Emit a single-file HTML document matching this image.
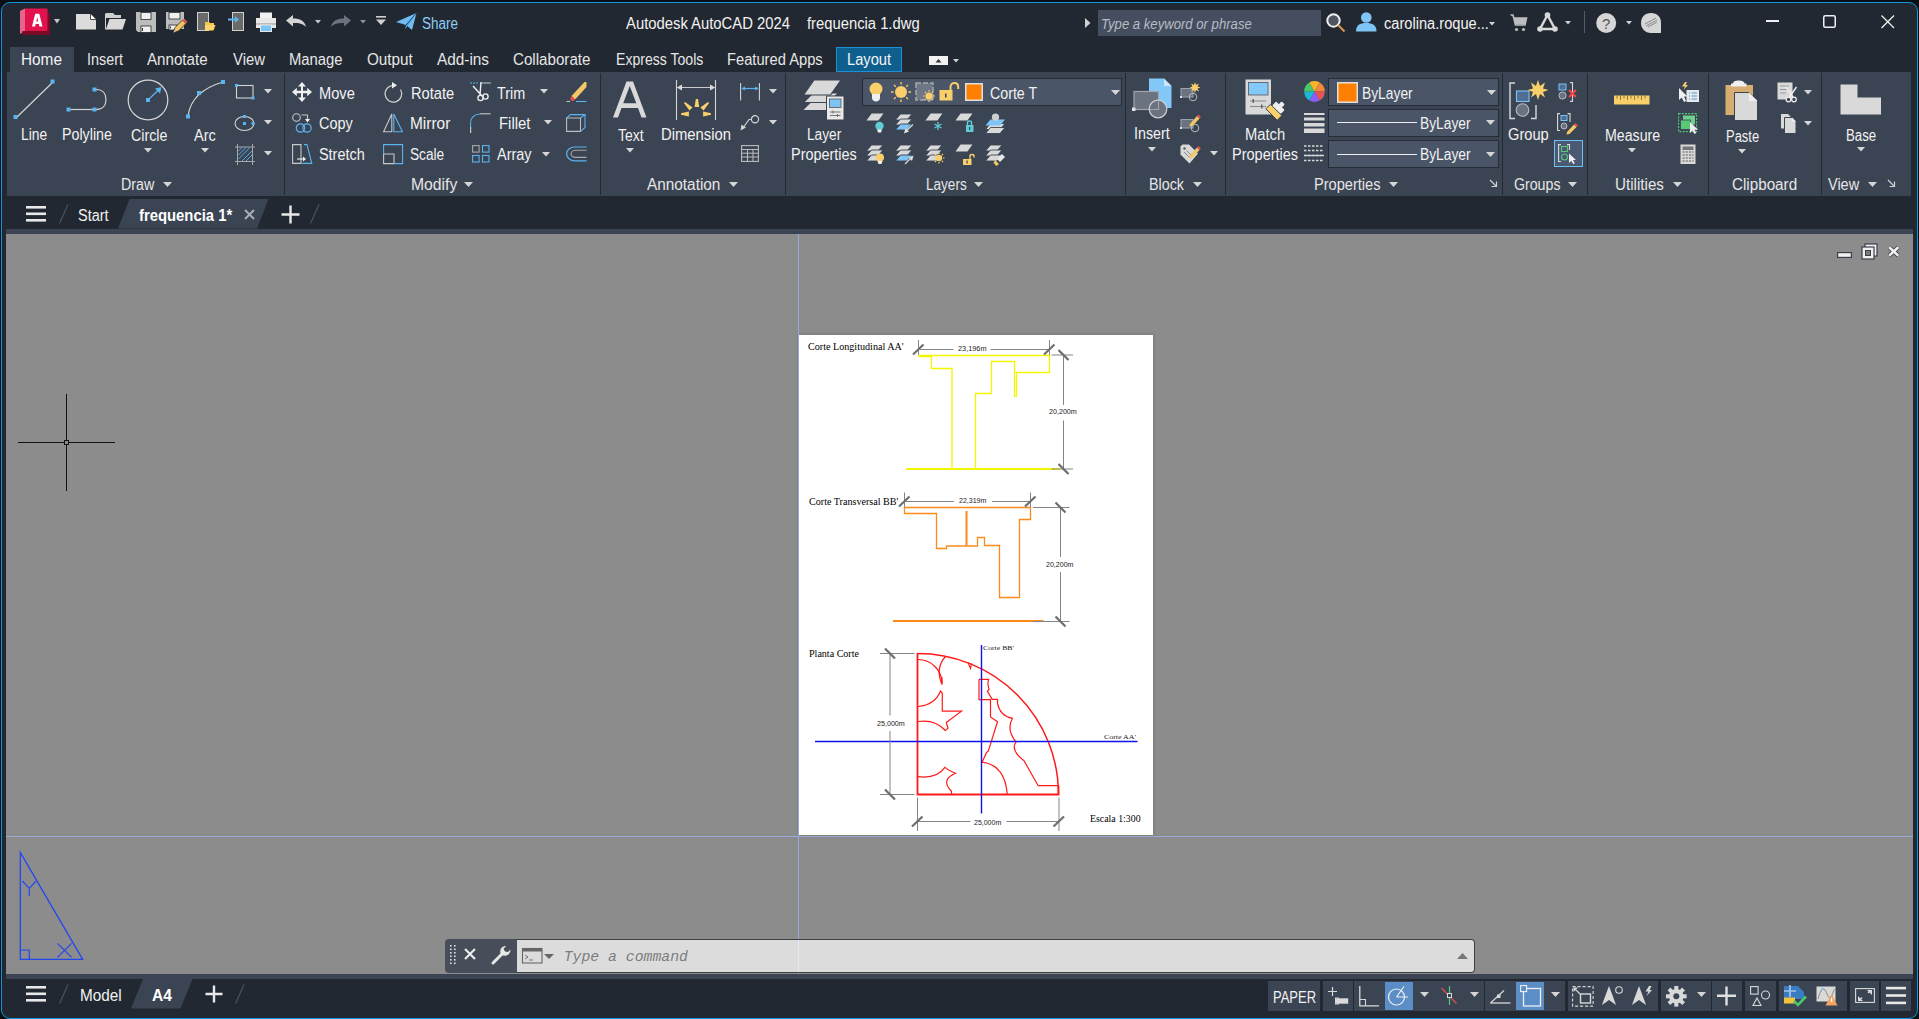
<!DOCTYPE html>
<html><head><meta charset="utf-8"><style>
html,body{margin:0;padding:0;width:1919px;height:1019px;overflow:hidden;background:#0b0e13}
.r{position:absolute;display:block}
.t{position:absolute;white-space:nowrap;line-height:1;transform-origin:0 0}
svg.r{overflow:visible}
</style></head><body>
<div class="r" style="left:1px;top:2px;width:1917px;height:1017px;background:#222831;border:1px solid #0f95dc;border-radius:9px;box-sizing:border-box"></div>
<div class="r" style="left:7px;top:72px;width:1904px;height:124px;background:#3b4453"></div>
<div class="r" style="left:6px;top:229px;width:1907px;height:5px;background:#3b4453"></div>
<div class="r" style="left:6px;top:234px;width:1907px;height:740px;background:#8c8c8c"></div>
<div class="r" style="left:6px;top:974px;width:1907px;height:5px;background:#3b4453"></div>
<svg class="r" style="left:19px;top:7px;" width="33" height="30" viewBox="0 0 33 30"><path d="M1 4 L6 1.5 V24 L1 27 Z" fill="#e8648c"/>
<path d="M3.5 24 H31 V28 H3.5 Z" fill="#7a0a26"/>
<path d="M28.5 6 H31 V28 H28.5 Z" fill="#7a0a26"/>
<rect x="6" y="1.5" width="22.5" height="22.5" fill="#e3124d"/>
<path d="M13 19.5 L16.2 6.7 H20.3 L23.5 19.5 H20.4 L19.8 17 H16.7 L16.1 19.5 Z M17.3 14.4 H19.2 L18.25 10.2 Z" fill="#fff"/></svg>
<svg class="r" style="left:54px;top:19px;" width="6" height="4.5" viewBox="0 0 6 4.5"><path d="M0 0H6 L3.0 4.5 Z" fill="#c8c8c8"/></svg>
<svg class="r" style="left:76px;top:13px;" width="21" height="17" viewBox="0 0 21 17"><path d="M0 1 H14.5 L20 6.5 V16.5 H0 Z" fill="#dcdcdc"/><path d="M14.5 1 V6.5 H20" fill="#fff" stroke="#222831" stroke-width="0.8"/></svg>
<svg class="r" style="left:105px;top:12px;" width="22" height="19" viewBox="0 0 22 19"><path d="M1 1 H8 L10 3 H16 V6 H1 Z" fill="#cfcfcf"/><path d="M1 6 V17 L4.5 7 H21 L17.5 17.5 H1" fill="#d9d9d9"/><path d="M0.5 1.5 V17.5" stroke="#cfcfcf" stroke-width="1"/></svg>
<svg class="r" style="left:136px;top:12px;" width="20" height="21" viewBox="0 0 20 21"><path d="M0 0 H20 V20 H0 Z" fill="#bdbdbd"/><rect x="5" y="0.5" width="10" height="7" fill="#f0f0f0" stroke="#222831" stroke-width="0.8"/><rect x="5" y="14" width="10" height="6.5" fill="#f0f0f0" stroke="#222831" stroke-width="0.8"/><rect x="6" y="16" width="1" height="3" fill="#333"/><path d="M0 18 L2 20 H0Z" fill="#222831"/></svg>
<svg class="r" style="left:166px;top:12px;" width="22" height="21" viewBox="0 0 22 21"><path d="M0 0 H18 V17 H0 Z" fill="#bdbdbd"/><rect x="3" y="0.5" width="11" height="6.5" fill="#f0f0f0" stroke="#222831" stroke-width="0.8"/><rect x="3" y="13" width="8" height="5" fill="#f0f0f0" stroke="#222831" stroke-width="0.8"/><rect x="4" y="14.5" width="1" height="2" fill="#333"/><path d="M7.5 20.5 L9 15.5 L16.5 8 L20 11.5 L12.5 19Z" fill="#f3c560" stroke="#222831" stroke-width="0.8"/><path d="M16.5 8 L18 6.5 L21.5 10 L20 11.5Z" fill="#e55"/><path d="M7.5 20.5 L8.2 18 L10 19.8Z" fill="#bbb"/></svg>
<svg class="r" style="left:197px;top:12px;" width="19" height="20" viewBox="0 0 19 20"><rect x="0.5" y="0.5" width="11" height="18" fill="#6a6a6a" stroke="#d0d0d0" stroke-width="1"/><path d="M8 10 H12 L13 11 H17 V13 H8Z" fill="#f5c74e"/><path d="M8 13 H18.5 L16.5 18.5 H8Z" fill="#ffd66b"/></svg>
<svg class="r" style="left:228px;top:12px;" width="17" height="20" viewBox="0 0 17 20"><rect x="4.5" y="0.5" width="11" height="18" fill="#6a6a6a" stroke="#d0d0d0" stroke-width="1"/><path d="M0 6.5 H7 V4 L11 7.5 L7 11 V8.5 H0 Z" fill="#5ab4f0"/></svg>
<svg class="r" style="left:256px;top:12px;" width="20" height="20" viewBox="0 0 20 20"><rect x="4" y="0.5" width="12" height="6" fill="#f2f2f2"/><path d="M0 6 H20 V16 H0Z" fill="#e8e8e8"/><rect x="0" y="11" width="20" height="2" fill="#bdbdbd"/><rect x="4.5" y="13" width="11" height="6.5" fill="#7cc4f5" stroke="#e8e8e8" stroke-width="1"/></svg>
<svg class="r" style="left:286px;top:15px;" width="21" height="13" viewBox="0 0 21 13"><path d="M0 5.5 L7 0 V3.5 C14 3.5 19 6 20 12 C17 8.5 13 8 7 8 V11.5 Z" fill="#d4d4d4"/></svg>
<svg class="r" style="left:315px;top:19.5px;" width="6" height="3.5" viewBox="0 0 6 3.5"><path d="M0 0H6 L3.0 3.5 Z" fill="#c8c8c8"/></svg>
<svg class="r" style="left:331px;top:15px;" width="20" height="13" viewBox="0 0 20 13"><path d="M20 5.5 L13 0 V3.5 C6 3.5 1 6 0 12 C3 8.5 7 8 13 8 V11.5 Z" fill="#6b7280"/></svg>
<svg class="r" style="left:360px;top:19.5px;" width="6" height="3.5" viewBox="0 0 6 3.5"><path d="M0 0H6 L3.0 3.5 Z" fill="#8b8f96"/></svg>
<svg class="r" style="left:376px;top:16px;" width="10" height="10" viewBox="0 0 10 10"><rect x="0" y="0" width="10" height="1.6" fill="#d0d0d0"/><path d="M0 3.5 H10 L5 9 Z" fill="#d0d0d0"/></svg>
<svg class="r" style="left:396px;top:13px;" width="21" height="18" viewBox="0 0 21 18"><path d="M0 9 L20.5 0 L16 17 L10 12 Z" fill="#6fbdf2"/><path d="M10 12 L20.5 0 L9 16.5 Z" fill="#4a9ed9"/><path d="M10 12 L20.5 0" stroke="#222831" stroke-width="0.8"/></svg>
<div class="t" style="left:422.00px;top:15.95px;font-size:16px;font-family:'Liberation Sans',sans-serif;font-weight:normal;font-style:normal;color:#8ccdf5;transform:scaleX(0.8421)">Share</div>
<div class="t" style="left:626.00px;top:15.65px;font-size:16px;font-family:'Liberation Sans',sans-serif;font-weight:normal;font-style:normal;color:#f2f2f2;transform:scaleX(0.9266)">Autodesk AutoCAD 2024</div>
<div class="t" style="left:807.00px;top:15.65px;font-size:16px;font-family:'Liberation Sans',sans-serif;font-weight:normal;font-style:normal;color:#f2f2f2;transform:scaleX(0.9240)">frequencia 1.dwg</div>
<svg class="r" style="left:1085px;top:18px;" width="6" height="10" viewBox="0 0 6 10"><path d="M0 0 L5.5 5 L0 10Z" fill="#d0d0d0"/></svg>
<div class="r" style="left:1098px;top:10px;width:223px;height:26px;background:#454e5f"></div>
<div class="t" style="left:1101.40px;top:16.30px;font-size:15px;font-family:'Liberation Sans',sans-serif;font-weight:normal;font-style:italic;color:#b7bcc4;transform:scaleX(0.8749)">Type a keyword or phrase</div>
<svg class="r" style="left:1326px;top:13px;" width="20" height="20" viewBox="0 0 20 20"><circle cx="7.5" cy="7.5" r="6.2" fill="#505560" stroke="#f0f0f0" stroke-width="2"/><path d="M12 12 L18.5 18.5" stroke="#d69a4e" stroke-width="2"/></svg>
<svg class="r" style="left:1356px;top:12px;" width="21" height="20" viewBox="0 0 21 20"><circle cx="10.3" cy="5.5" r="5.3" fill="#7ec4f7"/><path d="M0 19.5 C0 13 4 11 10.3 11 C16.5 11 20.5 13 20.5 19.5 Z" fill="#7ec4f7"/></svg>
<div class="t" style="left:1383.50px;top:16.15px;font-size:16px;font-family:'Liberation Sans',sans-serif;font-weight:normal;font-style:normal;color:#f2f2f2;transform:scaleX(0.9142)">carolina.roque...</div>
<svg class="r" style="left:1489px;top:21.5px;" width="6" height="3.5" viewBox="0 0 6 3.5"><path d="M0 0H6 L3.0 3.5 Z" fill="#d0d0d0"/></svg>
<svg class="r" style="left:1510px;top:14px;" width="17" height="18" viewBox="0 0 17 18"><path d="M0.5 1 H3 L5.5 11 H15 L16.5 4 H4" fill="none" stroke="#bdbdbd" stroke-width="1.6"/><path d="M4 4 H16.5 L15 10.5 H5.5Z" fill="#bdbdbd"/><circle cx="6.5" cy="15.5" r="1.6" fill="#bdbdbd"/><circle cx="13.5" cy="15.5" r="1.6" fill="#bdbdbd"/></svg>
<svg class="r" style="left:1537px;top:12px;" width="21" height="20" viewBox="0 0 21 20"><path d="M10.5 3 L3 17 H18 Z" fill="none" stroke="#d9d9d9" stroke-width="2.4"/><circle cx="10.5" cy="3" r="2.8" fill="#d9d9d9"/><circle cx="3" cy="17" r="2.8" fill="#d9d9d9"/><circle cx="18" cy="17" r="2.8" fill="#d9d9d9"/></svg>
<svg class="r" style="left:1565px;top:21px;" width="6" height="3.5" viewBox="0 0 6 3.5"><path d="M0 0H6 L3.0 3.5 Z" fill="#d0d0d0"/></svg>
<div class="r" style="left:1584px;top:11px;width:1px;height:22px;background:#555b66"></div>
<svg class="r" style="left:1596px;top:13px;" width="21" height="21" viewBox="0 0 21 21"><circle cx="10.2" cy="10" r="10" fill="#d6d6d6"/><text x="10.2" y="15.5" font-family="Liberation Sans" font-size="15" text-anchor="middle" fill="#555">?</text></svg>
<svg class="r" style="left:1626px;top:21px;" width="6" height="3.5" viewBox="0 0 6 3.5"><path d="M0 0H6 L3.0 3.5 Z" fill="#d0d0d0"/></svg>
<svg class="r" style="left:1641px;top:13px;" width="21" height="20" viewBox="0 0 21 20"><path d="M10 0 C16 0 20 4 20 9.5 V20 H10 C4 20 0 15.5 0 10 C0 4 4 0 10 0Z" fill="#d6d6d6"/><path d="M4 11 L15 5 M5 13 L16 7 M7 14 L16 9" stroke="#8a8a8a" stroke-width="1"/></svg>
<div class="r" style="left:1766px;top:20px;width:12.5px;height:1.5px;background:#f0f0f0"></div>
<svg class="r" style="left:1823px;top:15px;" width="13" height="13" viewBox="0 0 13 13"><rect x="0.75" y="0.75" width="11.5" height="11.5" rx="1.5" fill="none" stroke="#f0f0f0" stroke-width="1.5"/></svg>
<svg class="r" style="left:1881px;top:15px;" width="14" height="14" viewBox="0 0 14 14"><path d="M0.5 0.5 L13 13 M13 0.5 L0.5 13" stroke="#f0f0f0" stroke-width="1.3"/></svg>
<div class="r" style="left:10px;top:47px;width:64px;height:25px;background:#3b4453"></div>
<div class="t" style="left:21.00px;top:52.25px;font-size:16px;font-family:'Liberation Sans',sans-serif;font-weight:normal;font-style:normal;color:#f5f5f5;transform:scaleX(0.9591)">Home</div>
<div class="t" style="left:87.00px;top:52.25px;font-size:16px;font-family:'Liberation Sans',sans-serif;font-weight:normal;font-style:normal;color:#e6e6e6;transform:scaleX(0.9000)">Insert</div>
<div class="t" style="left:147.00px;top:52.25px;font-size:16px;font-family:'Liberation Sans',sans-serif;font-weight:normal;font-style:normal;color:#e6e6e6;transform:scaleX(0.9453)">Annotate</div>
<div class="t" style="left:232.50px;top:52.25px;font-size:16px;font-family:'Liberation Sans',sans-serif;font-weight:normal;font-style:normal;color:#e6e6e6;transform:scaleX(0.9275)">View</div>
<div class="t" style="left:289.00px;top:52.25px;font-size:16px;font-family:'Liberation Sans',sans-serif;font-weight:normal;font-style:normal;color:#e6e6e6;transform:scaleX(0.9264)">Manage</div>
<div class="t" style="left:366.75px;top:52.25px;font-size:16px;font-family:'Liberation Sans',sans-serif;font-weight:normal;font-style:normal;color:#e6e6e6;transform:scaleX(0.9531)">Output</div>
<div class="t" style="left:437.00px;top:52.25px;font-size:16px;font-family:'Liberation Sans',sans-serif;font-weight:normal;font-style:normal;color:#e6e6e6;transform:scaleX(0.9585)">Add-ins</div>
<div class="t" style="left:513.00px;top:52.25px;font-size:16px;font-family:'Liberation Sans',sans-serif;font-weight:normal;font-style:normal;color:#e6e6e6;transform:scaleX(0.9468)">Collaborate</div>
<div class="t" style="left:615.70px;top:52.25px;font-size:16px;font-family:'Liberation Sans',sans-serif;font-weight:normal;font-style:normal;color:#e6e6e6;transform:scaleX(0.8796)">Express Tools</div>
<div class="t" style="left:726.90px;top:52.25px;font-size:16px;font-family:'Liberation Sans',sans-serif;font-weight:normal;font-style:normal;color:#e6e6e6;transform:scaleX(0.9192)">Featured Apps</div>
<div class="r" style="left:836px;top:47px;width:66px;height:25px;background:#0f5f8e;border:1px solid #1d8fd2;box-sizing:border-box"></div>
<div class="t" style="left:847.00px;top:52.25px;font-size:16px;font-family:'Liberation Sans',sans-serif;font-weight:normal;font-style:normal;color:#f5f5f5;transform:scaleX(0.9167)">Layout</div>
<svg class="r" style="left:929px;top:56px;" width="19" height="9" viewBox="0 0 19 9"><rect width="19" height="9" fill="#f2f2f2"/><path d="M6.5 6.5 L9.5 3 L12.5 6.5Z" fill="#333"/></svg>
<svg class="r" style="left:953px;top:58.5px;" width="6" height="3.5" viewBox="0 0 6 3.5"><path d="M0 0H6 L3.0 3.5 Z" fill="#d0d0d0"/></svg>
<div class="r" style="left:284px;top:73px;width:1px;height:122px;background:#232a34"></div>
<div class="r" style="left:600px;top:73px;width:1px;height:122px;background:#232a34"></div>
<div class="r" style="left:785px;top:73px;width:1px;height:122px;background:#232a34"></div>
<div class="r" style="left:1125px;top:73px;width:1px;height:122px;background:#232a34"></div>
<div class="r" style="left:1225px;top:73px;width:1px;height:122px;background:#232a34"></div>
<div class="r" style="left:1502px;top:73px;width:1px;height:122px;background:#232a34"></div>
<div class="r" style="left:1587px;top:73px;width:1px;height:122px;background:#232a34"></div>
<div class="r" style="left:1708px;top:73px;width:1px;height:122px;background:#232a34"></div>
<div class="r" style="left:1821px;top:73px;width:1px;height:122px;background:#232a34"></div>
<svg class="r" style="left:13px;top:79px;" width="42" height="42" viewBox="0 0 42 42"><path d="M4 38 L39 4" stroke="#d4d4d4" stroke-width="1.2"/><rect x="0.5" y="36" width="4" height="4" fill="#5ab4f0"/><rect x="37.5" y="0.5" width="4" height="4" fill="#5ab4f0"/></svg>
<div class="t" style="left:20.80px;top:127.25px;font-size:16px;font-family:'Liberation Sans',sans-serif;font-weight:normal;font-style:normal;color:#f2f2f2;transform:scaleX(0.8628)">Line</div>
<svg class="r" style="left:66px;top:87px;" width="42" height="26" viewBox="0 0 42 26"><path d="M4.5 22.5 H27" stroke="#d4d4d4" stroke-width="1.2"/><path d="M30 2.5 C37 2.5 40 7 40 12.5 C40 18 37 22.5 30 22.5" fill="none" stroke="#d4d4d4" stroke-width="1.2"/><rect x="0.5" y="20.5" width="4" height="4" fill="#5ab4f0"/><rect x="26.5" y="20.5" width="4" height="4" fill="#5ab4f0"/><rect x="26.5" y="0.5" width="4" height="4" fill="#5ab4f0"/></svg>
<div class="t" style="left:61.90px;top:127.25px;font-size:16px;font-family:'Liberation Sans',sans-serif;font-weight:normal;font-style:normal;color:#f2f2f2;transform:scaleX(0.8911)">Polyline</div>
<svg class="r" style="left:127px;top:79px;" width="42" height="42" viewBox="0 0 42 42"><circle cx="21" cy="21" r="19.8" fill="none" stroke="#d4d4d4" stroke-width="1.2"/><path d="M21 21 L33 9.5" stroke="#5ab4f0" stroke-width="1.2"/><path d="M34.5 8 L28 9.5 L33 14.5Z" fill="#5ab4f0"/><rect x="19" y="19" width="4" height="4" fill="#5ab4f0"/></svg>
<div class="t" style="left:130.60px;top:127.75px;font-size:16px;font-family:'Liberation Sans',sans-serif;font-weight:normal;font-style:normal;color:#f2f2f2;transform:scaleX(0.8902)">Circle</div>
<svg class="r" style="left:144.0px;top:148.25px;" width="8" height="4.5" viewBox="0 0 8 4.5"><path d="M0 0H8 L4.0 4.5 Z" fill="#d6d6d6"/></svg>
<svg class="r" style="left:185px;top:79px;" width="42" height="42" viewBox="0 0 42 42"><path d="M3 37 C5 22 14 10 38 3" fill="none" stroke="#d4d4d4" stroke-width="1.2"/><rect x="1" y="35.5" width="4" height="4" fill="#5ab4f0"/><rect x="12" y="12" width="4" height="4" fill="#5ab4f0"/><rect x="36" y="1" width="4" height="4" fill="#5ab4f0"/></svg>
<div class="t" style="left:194.20px;top:127.75px;font-size:16px;font-family:'Liberation Sans',sans-serif;font-weight:normal;font-style:normal;color:#f2f2f2;transform:scaleX(0.9083)">Arc</div>
<svg class="r" style="left:201.0px;top:148.25px;" width="8" height="4.5" viewBox="0 0 8 4.5"><path d="M0 0H8 L4.0 4.5 Z" fill="#d6d6d6"/></svg>
<svg class="r" style="left:235px;top:84px;" width="20" height="16" viewBox="0 0 20 16"><rect x="1.5" y="1.5" width="16.5" height="12.5" fill="none" stroke="#d4d4d4" stroke-width="1.1"/><rect x="0" y="0" width="3" height="3" fill="#5ab4f0"/><rect x="16.5" y="12.5" width="3" height="3" fill="#5ab4f0"/></svg>
<svg class="r" style="left:264.0px;top:89.45px;" width="8" height="4.5" viewBox="0 0 8 4.5"><path d="M0 0H8 L4.0 4.5 Z" fill="#d6d6d6"/></svg>
<svg class="r" style="left:234px;top:115px;" width="21" height="17" viewBox="0 0 21 17"><ellipse cx="10.5" cy="8.5" rx="9.5" ry="7" fill="none" stroke="#d4d4d4" stroke-width="1.1"/><rect x="9" y="0" width="3" height="3" fill="#5ab4f0"/><rect x="9" y="7" width="3" height="3" fill="#5ab4f0"/><rect x="17.5" y="7" width="3" height="3" fill="#5ab4f0"/></svg>
<svg class="r" style="left:264.0px;top:120.05px;" width="8" height="4.5" viewBox="0 0 8 4.5"><path d="M0 0H8 L4.0 4.5 Z" fill="#d6d6d6"/></svg>
<svg class="r" style="left:234px;top:144px;" width="22" height="21" viewBox="0 0 22 21"><path d="M1 3 H21 M1 17.5 H21 M3.5 0 V21 M18.5 0 V21" stroke="#a8a8a8" stroke-width="1"/><path d="M4.5 7 L8 3.5 M4.5 11 L12 3.5 M4.5 15 L16 3.5 M8 17 L18 7 M12 17 L18 11" stroke="#5ab4f0" stroke-width="0.9"/></svg>
<svg class="r" style="left:264.0px;top:151.25px;" width="8" height="4.5" viewBox="0 0 8 4.5"><path d="M0 0H8 L4.0 4.5 Z" fill="#d6d6d6"/></svg>
<div class="t" style="left:121.20px;top:176.75px;font-size:16px;font-family:'Liberation Sans',sans-serif;font-weight:normal;font-style:normal;color:#e6e6e6;transform:scaleX(0.8933)">Draw</div>
<svg class="r" style="left:162.5px;top:182.2px;" width="9" height="5" viewBox="0 0 9 5"><path d="M0 0H9 L4.5 5 Z" fill="#d6d6d6"/></svg>
<svg class="r" style="left:292px;top:82px;" width="20" height="20" viewBox="0 0 20 20"><path d="M10 0 L14 4.5 H11 V8.8 H15.2 V5.8 L20 10 L15.2 14.2 V11.2 H11 V15.5 H14 L10 20 L6 15.5 H9 V11.2 H4.8 V14.2 L0 10 L4.8 5.8 V8.8 H9 V4.5 H6Z" fill="#f0f0f0"/></svg>
<div class="t" style="left:318.70px;top:85.75px;font-size:16px;font-family:'Liberation Sans',sans-serif;font-weight:normal;font-style:normal;color:#f2f2f2;transform:scaleX(0.9146)">Move</div>
<svg class="r" style="left:292px;top:113px;" width="20" height="20" viewBox="0 0 20 20"><circle cx="4.5" cy="4.5" r="3.8" fill="none" stroke="#c8c8c8" stroke-width="1.1"/><path d="M9.5 2 H15.5 V7" fill="none" stroke="#c8c8c8" stroke-width="1.1"/><path d="M13 6 H18 L15.5 9.5Z" fill="#f0f0f0"/><circle cx="8.5" cy="15" r="4.2" fill="none" stroke="#5ab4f0" stroke-width="1.2"/><circle cx="15" cy="15" r="4.2" fill="none" stroke="#5ab4f0" stroke-width="1.2"/></svg>
<div class="t" style="left:319.30px;top:116.25px;font-size:16px;font-family:'Liberation Sans',sans-serif;font-weight:normal;font-style:normal;color:#f2f2f2;transform:scaleX(0.9020)">Copy</div>
<svg class="r" style="left:292px;top:144px;" width="21" height="21" viewBox="0 0 21 21"><path d="M0.6 19.4 V0.6 H9 V19.4 Z" fill="none" stroke="#c8c8c8" stroke-width="1.1"/><path d="M12 0.6 H15 L19.8 19.4 H10" fill="none" stroke="#5ab4f0" stroke-width="1.1"/><path d="M5 15 H12" stroke="#f0f0f0" stroke-width="1.1"/><path d="M11 12.5 L14 15 L11 17.5Z" fill="#f0f0f0"/></svg>
<div class="t" style="left:319.30px;top:147.25px;font-size:16px;font-family:'Liberation Sans',sans-serif;font-weight:normal;font-style:normal;color:#f2f2f2;transform:scaleX(0.9005)">Stretch</div>
<svg class="r" style="left:383px;top:82px;" width="20" height="21" viewBox="0 0 20 21"><path d="M10.5 3.5 A8.3 8.3 0 1 0 17.5 7.5" fill="none" stroke="#d4d4d4" stroke-width="1.2"/><path d="M9 0 L14 3.2 L9 6.5Z" fill="#f0f0f0"/></svg>
<div class="t" style="left:410.60px;top:85.75px;font-size:16px;font-family:'Liberation Sans',sans-serif;font-weight:normal;font-style:normal;color:#f2f2f2;transform:scaleX(0.9164)">Rotate</div>
<svg class="r" style="left:383px;top:113px;" width="20" height="20" viewBox="0 0 20 20"><path d="M8.8 1 V18.8 H0.6 Z" fill="none" stroke="#c8c8c8" stroke-width="1.1"/><path d="M10.8 1 V18.8 H19.4 Z" fill="none" stroke="#5ab4f0" stroke-width="1.1"/></svg>
<div class="t" style="left:409.70px;top:116.25px;font-size:16px;font-family:'Liberation Sans',sans-serif;font-weight:normal;font-style:normal;color:#f2f2f2;transform:scaleX(0.9653)">Mirror</div>
<svg class="r" style="left:383px;top:144px;" width="21" height="21" viewBox="0 0 21 21"><path d="M0.6 10 V19.6 H11 V10 Z" fill="none" stroke="#c8c8c8" stroke-width="1.1"/><path d="M0.6 9.5 V0.6 H19.6 V19.6 H11.5" fill="none" stroke="#5ab4f0" stroke-width="1.1"/></svg>
<div class="t" style="left:409.70px;top:147.25px;font-size:16px;font-family:'Liberation Sans',sans-serif;font-weight:normal;font-style:normal;color:#f2f2f2;transform:scaleX(0.8550)">Scale</div>
<svg class="r" style="left:470px;top:82px;" width="22" height="21" viewBox="0 0 22 21"><path d="M0 1 H9 M11 1 H21" stroke="#5ab4f0" stroke-width="1" stroke-dasharray="2 1"/><path d="M11 1 H21" stroke="#9aa0a8" stroke-width="1.2"/><path d="M3 4 L12 14 M11 0 L10 13" stroke="#f0f0f0" stroke-width="1.4"/><circle cx="10.5" cy="16" r="2.6" fill="none" stroke="#f0f0f0" stroke-width="1.3"/><circle cx="15.5" cy="14.5" r="2.6" fill="none" stroke="#f0f0f0" stroke-width="1.3"/></svg>
<div class="t" style="left:497.10px;top:85.75px;font-size:16px;font-family:'Liberation Sans',sans-serif;font-weight:normal;font-style:normal;color:#f2f2f2;transform:scaleX(0.8984)">Trim</div>
<svg class="r" style="left:540.2px;top:89.45px;" width="8" height="4.5" viewBox="0 0 8 4.5"><path d="M0 0H8 L4.0 4.5 Z" fill="#d6d6d6"/></svg>
<svg class="r" style="left:566px;top:81px;" width="21" height="22" viewBox="0 0 21 22"><path d="M5.5 15 L18.5 1 L20.5 1 V6 L9 18.5 Z" fill="#f3c865"/><path d="M5.5 15 L9 18.5 L7.5 20 C5.5 20.5 4 19 4.5 17 Z" fill="#e94b55"/><path d="M0.5 20.5 H4" stroke="#c8c8c8" stroke-width="1.1"/><path d="M10 20.5 H20.5" stroke="#5ab4f0" stroke-width="1.1"/></svg>
<svg class="r" style="left:470px;top:113px;" width="21" height="21" viewBox="0 0 21 21"><path d="M0.6 20 V10 C0.6 5 4 1 10 1" fill="none" stroke="#5ab4f0" stroke-width="1.1"/><path d="M10 0.8 H20.5" stroke="#c8c8c8" stroke-width="1.1"/><path d="M0.6 14 V20" stroke="#c8c8c8" stroke-width="1.1"/></svg>
<div class="t" style="left:498.60px;top:116.25px;font-size:16px;font-family:'Liberation Sans',sans-serif;font-weight:normal;font-style:normal;color:#f2f2f2;transform:scaleX(0.9304)">Fillet</div>
<svg class="r" style="left:544.0px;top:120.05px;" width="8" height="4.5" viewBox="0 0 8 4.5"><path d="M0 0H8 L4.0 4.5 Z" fill="#d6d6d6"/></svg>
<svg class="r" style="left:566px;top:114px;" width="20" height="18" viewBox="0 0 20 18"><path d="M0.6 4 H14.5 V17.4 H0.6 Z" fill="none" stroke="#bdbdbd" stroke-width="1.1"/><path d="M0.6 4 L4.5 0.6 H19 V13.5 L14.5 17.4 M14.5 4 L19 0.6" fill="none" stroke="#5ab4f0" stroke-width="1.1"/></svg>
<svg class="r" style="left:472px;top:145px;" width="18" height="18" viewBox="0 0 18 18"><rect x="0.6" y="0.6" width="6.5" height="6.5" fill="none" stroke="#a8a8a8" stroke-width="1.1"/><rect x="10.5" y="0.6" width="6.5" height="6.5" fill="none" stroke="#5ab4f0" stroke-width="1.1"/><rect x="0.6" y="10.5" width="6.5" height="6.5" fill="none" stroke="#5ab4f0" stroke-width="1.1"/><rect x="10.5" y="10.5" width="6.5" height="6.5" fill="none" stroke="#5ab4f0" stroke-width="1.1"/></svg>
<div class="t" style="left:497.30px;top:147.25px;font-size:16px;font-family:'Liberation Sans',sans-serif;font-weight:normal;font-style:normal;color:#f2f2f2;transform:scaleX(0.9020)">Array</div>
<svg class="r" style="left:542.0px;top:151.75px;" width="8" height="4.5" viewBox="0 0 8 4.5"><path d="M0 0H8 L4.0 4.5 Z" fill="#d6d6d6"/></svg>
<svg class="r" style="left:566px;top:146px;" width="21" height="16" viewBox="0 0 21 16"><path d="M20.5 1 H9 C4 1 0.6 4 0.6 7.8 C0.6 11.5 4 14.8 9 14.8 H20.5" fill="none" stroke="#5ab4f0" stroke-width="1.2"/><path d="M20.5 4.3 H9.5 C7 4.3 5 6 5 7.8 C5 9.7 7 11.4 9.5 11.4 H20.5" fill="none" stroke="#a8a8a8" stroke-width="1.1"/></svg>
<div class="t" style="left:410.60px;top:176.75px;font-size:16px;font-family:'Liberation Sans',sans-serif;font-weight:normal;font-style:normal;color:#e6e6e6;transform:scaleX(0.9820)">Modify</div>
<svg class="r" style="left:464.3px;top:182.2px;" width="9" height="5" viewBox="0 0 9 5"><path d="M0 0H9 L4.5 5 Z" fill="#d6d6d6"/></svg>
<svg class="r" style="left:613px;top:81px;" width="34" height="37" viewBox="0 0 34 37"><path d="M0 36.5 L13.5 0.5 H20 L33.5 36.5 H28.5 L25 27 H8.5 L5 36.5 Z M10.2 22.3 H23.3 L16.75 5 Z" fill="#d9d9d9"/></svg>
<div class="t" style="left:617.90px;top:128.25px;font-size:16px;font-family:'Liberation Sans',sans-serif;font-weight:normal;font-style:normal;color:#f2f2f2;transform:scaleX(0.8780)">Text</div>
<svg class="r" style="left:626.0px;top:148.35px;" width="8" height="4.5" viewBox="0 0 8 4.5"><path d="M0 0H8 L4.0 4.5 Z" fill="#d6d6d6"/></svg>
<svg class="r" style="left:675px;top:79px;" width="43" height="42" viewBox="0 0 43 42"><path d="M1.5 1 V41 M40.5 1 V41" stroke="#d4d4d4" stroke-width="1.1"/><path d="M3 8.5 H39" stroke="#d9d9d9" stroke-width="0.9"/><path d="M1.8 8.5 L7 5.5 V11.5Z M40.2 8.5 L35 5.5 V11.5Z" fill="#d9d9d9"/><path d="M20.8 20 H23 L24.2 28 H19.6Z M6 34.2 L13.9 32.6 V37.4 L6 35.8Z M36 34.2 L28.1 32.6 V37.4 L36 35.8Z M10.1 22.9 L17.6 28.4 L14.4 31.6 L8.9 24.1Z M32.9 22.9 L25.4 28.4 L28.6 31.6 L34.1 24.1Z" fill="#f8cf6a"/></svg>
<div class="t" style="left:660.70px;top:127.25px;font-size:16px;font-family:'Liberation Sans',sans-serif;font-weight:normal;font-style:normal;color:#f2f2f2;transform:scaleX(0.9272)">Dimension</div>
<svg class="r" style="left:740px;top:83px;" width="20" height="18" viewBox="0 0 20 18"><path d="M0.6 0 V17.5 M19.4 0 V17.5" stroke="#d4d4d4" stroke-width="1.1"/><path d="M2 5.5 H18" stroke="#5ab4f0" stroke-width="1.2"/><path d="M1.5 5.5 L5 3.5 V7.5Z M18.5 5.5 L15 3.5 V7.5Z" fill="#5ab4f0"/></svg>
<svg class="r" style="left:768.9px;top:89.45px;" width="8" height="4.5" viewBox="0 0 8 4.5"><path d="M0 0H8 L4.0 4.5 Z" fill="#d6d6d6"/></svg>
<svg class="r" style="left:740px;top:115px;" width="20" height="16" viewBox="0 0 20 16"><circle cx="15" cy="4.3" r="3.6" fill="none" stroke="#d4d4d4" stroke-width="1.2"/><path d="M11.5 4.5 H9 L3 13" fill="none" stroke="#d4d4d4" stroke-width="1.2"/><path d="M0.5 15.5 L1.5 9.5 L6 12.5Z" fill="#d4d4d4"/></svg>
<svg class="r" style="left:768.9px;top:120.05px;" width="8" height="4.5" viewBox="0 0 8 4.5"><path d="M0 0H8 L4.0 4.5 Z" fill="#d6d6d6"/></svg>
<svg class="r" style="left:741px;top:145px;" width="18" height="17" viewBox="0 0 18 17"><rect x="0.6" y="0.6" width="16.8" height="15.8" fill="none" stroke="#bdbdbd" stroke-width="1.1"/><path d="M0.6 4.5 H17.4 M0.6 8.2 H17.4 M0.6 12 H17.4 M6.5 4.5 V16.4 M12 4.5 V16.4" stroke="#bdbdbd" stroke-width="1"/></svg>
<div class="t" style="left:646.50px;top:176.75px;font-size:16px;font-family:'Liberation Sans',sans-serif;font-weight:normal;font-style:normal;color:#e6e6e6;transform:scaleX(0.9595)">Annotation</div>
<svg class="r" style="left:728.6px;top:182.2px;" width="9" height="5" viewBox="0 0 9 5"><path d="M0 0H9 L4.5 5 Z" fill="#d6d6d6"/></svg>
<svg class="r" style="left:803px;top:79px;" width="42" height="42" viewBox="0 0 42 42"><path d="M0.5 31 L10 21.5 H35.5 L26 31Z" fill="#d9d9d9"/>
<path d="M0.5 23.5 L10 14 H35.5 L26 23.5Z" fill="#d9d9d9" stroke="#3b4453" stroke-width="1.2"/>
<path d="M0.5 16 L11 1 H38 L27.5 16Z" fill="#d9d9d9" stroke="#3b4453" stroke-width="1.2"/>
<rect x="23.5" y="17" width="17.5" height="24" fill="#e8e8e8" stroke="#3b4453" stroke-width="1"/>
<rect x="26.5" y="20" width="11.5" height="8.5" fill="#7cc4f5" stroke="#555" stroke-width="0.8"/>
<path d="M27 33 H37.5 M27 36.5 H37.5" stroke="#666" stroke-width="0.9"/><path d="M30 31.5 V34.5 M34.5 35 V38" stroke="#666" stroke-width="0.9"/></svg>
<div class="t" style="left:806.80px;top:127.25px;font-size:16px;font-family:'Liberation Sans',sans-serif;font-weight:normal;font-style:normal;color:#f2f2f2;transform:scaleX(0.8550)">Layer</div>
<div class="t" style="left:790.90px;top:147.25px;font-size:16px;font-family:'Liberation Sans',sans-serif;font-weight:normal;font-style:normal;color:#f2f2f2;transform:scaleX(0.9027)">Properties</div>
<div class="r" style="left:862px;top:78px;width:260px;height:28px;background:#4a5568;border:1px solid #262c36;box-sizing:border-box"></div>
<svg class="r" style="left:869px;top:82px;" width="14" height="20" viewBox="0 0 14 20"><circle cx="7" cy="7" r="6.5" fill="#f8cf6a"/><path d="M3 12 H11 V16 C11 18 9 19.5 7 19.5 C5 19.5 3 18 3 16Z" fill="#f0f0f0"/></svg>
<svg class="r" style="left:891px;top:82px;" width="20" height="20" viewBox="0 0 20 20"><circle cx="10" cy="10" r="6" fill="#f8cf6a"/><path d="M10 0 V2.5 M10 17.5 V20 M0 10 H2.5 M17.5 10 H20 M3 3 L4.8 4.8 M15.2 15.2 L17 17 M17 3 L15.2 4.8 M3 17 L4.8 15.2" stroke="#f8cf6a" stroke-width="1.3"/></svg>
<svg class="r" style="left:915px;top:82px;" width="21" height="20" viewBox="0 0 21 20"><rect x="1" y="1" width="17" height="17" fill="#6e7787" stroke="#a8a8a8" stroke-width="1.5" stroke-dasharray="5 2"/><circle cx="14" cy="14" r="3.6" fill="#f8cf6a"/><path d="M14 8 V9.5 M14 18.5 V20 M8 14 H9.5 M18.5 14 H20 M10 10 L11 11 M17 17 L18 18 M18 10 L17 11 M10 18 L11 17" stroke="#f8cf6a" stroke-width="1.2"/></svg>
<svg class="r" style="left:939px;top:82px;" width="20" height="19" viewBox="0 0 20 19"><path d="M11.5 8 V5 C11.5 2.5 13.5 1 15.5 1 C17.5 1 19.2 2.5 19.2 5 V7" fill="none" stroke="#f8cf6a" stroke-width="2"/><rect x="0.5" y="8" width="13" height="10.5" fill="#f8cf6a"/><rect x="6" y="11.5" width="1.5" height="4" fill="#3b4453"/></svg>
<svg class="r" style="left:965px;top:83px;" width="18" height="18" viewBox="0 0 18 18"><rect x="0.75" y="0.75" width="16.5" height="16.5" fill="#ff8000" stroke="#e0e0e0" stroke-width="1.5"/></svg>
<div class="t" style="left:989.50px;top:85.75px;font-size:16px;font-family:'Liberation Sans',sans-serif;font-weight:normal;font-style:normal;color:#f2f2f2;transform:scaleX(0.8887)">Corte T</div>
<svg class="r" style="left:1110.5px;top:89.8px;" width="9" height="5" viewBox="0 0 9 5"><path d="M0 0H9 L4.5 5 Z" fill="#d6d6d6"/></svg>
<svg class="r" style="left:866px;top:113px;" width="20" height="21" viewBox="0 0 20 21"><path d="M0.5 7.5 L5.6 0.5 H17.5 L12.399999999999999 7.5Z" fill="#d9d9d9"/><circle cx="13.5" cy="13" r="4.2" fill="#5fcbd6"/><path d="M11 16.5 H16 L15 19.5 H12Z" fill="#f0f0f0"/></svg>
<svg class="r" style="left:895px;top:113px;" width="20" height="21" viewBox="0 0 20 21"><path d="M0.5 7 L5.5 1 H17 L12 7Z" fill="#d9d9d9" stroke="#3b4453" stroke-width="0.9"/><path d="M0.5 12 L5.5 6 H17 L12 12Z" fill="#d9d9d9" stroke="#3b4453" stroke-width="0.9"/><path d="M0.5 17 L5.5 11 H17 L12 17Z" fill="#7cc4f5" stroke="#3b4453" stroke-width="0.9"/><path d="M10 19 L18 11.5" stroke="#e0e0e0" stroke-width="1.1"/><path d="M9 20.5 L10.5 15 L14 18.5Z" fill="#e0e0e0"/></svg>
<svg class="r" style="left:925px;top:113px;" width="20" height="21" viewBox="0 0 20 21"><path d="M0.5 7.5 L5.6 0.5 H17.5 L12.399999999999999 7.5Z" fill="#d9d9d9"/><path d="M13 9 V17 M9.5 11 L16.5 15 M16.5 11 L9.5 15" stroke="#5fcbd6" stroke-width="1.3"/></svg>
<svg class="r" style="left:955px;top:113px;" width="22" height="21" viewBox="0 0 22 21"><path d="M0.5 7.5 L5.6 0.5 H17.5 L12.399999999999999 7.5Z" fill="#d9d9d9"/><path d="M12.5 12 V9.5 C12.5 7.5 16.5 7.5 16.5 9.5 V12" fill="none" stroke="#5fcbd6" stroke-width="1.4"/><rect x="11" y="12" width="7.5" height="7" fill="#5fcbd6"/><rect x="14" y="14" width="1.2" height="3" fill="#3b4453"/></svg>
<svg class="r" style="left:985px;top:113px;" width="21" height="21" viewBox="0 0 21 21"><path d="M0.5 12.5 L5.5 6.5 H20 L15 12.5Z" fill="#7cc4f5" stroke="#3b4453" stroke-width="0.9"/><path d="M0.5 16.5 L5.5 10.5 H20 L15 16.5Z" fill="#d9d9d9" stroke="#3b4453" stroke-width="0.9"/><path d="M0.5 20.5 L5.5 14.5 H20 L15 20.5Z" fill="#d9d9d9" stroke="#3b4453" stroke-width="0.9"/><path d="M0.5 12.5 L5.5 6.5 H20 L15 12.5Z" fill="#7cc4f5"/><circle cx="10.5" cy="4.2" r="3.6" fill="#cfcfcf"/></svg>
<svg class="r" style="left:866px;top:144px;" width="20" height="21" viewBox="0 0 20 21"><path d="M0.5 7 L5.5 1 H17 L12 7Z" fill="#d9d9d9" stroke="#3b4453" stroke-width="0.9"/><path d="M0.5 12 L5.5 6 H17 L12 12Z" fill="#d9d9d9" stroke="#3b4453" stroke-width="0.9"/><path d="M0.5 17 L5.5 11 H17 L12 17Z" fill="#d9d9d9" stroke="#3b4453" stroke-width="0.9"/><circle cx="14" cy="13.5" r="4" fill="#f8cf6a"/><path d="M11.5 17 H16.5 L15.5 20 H12.5Z" fill="#f0f0f0"/></svg>
<svg class="r" style="left:895px;top:144px;" width="20" height="21" viewBox="0 0 20 21"><path d="M0.5 7 L5.5 1 H17 L12 7Z" fill="#d9d9d9" stroke="#3b4453" stroke-width="0.9"/><path d="M0.5 12 L5.5 6 H17 L12 12Z" fill="#d9d9d9" stroke="#3b4453" stroke-width="0.9"/><path d="M0.5 17 L5.5 11 H17 L12 17Z" fill="#7cc4f5" stroke="#3b4453" stroke-width="0.9"/><path d="M10 20 L17.5 12.5" stroke="#e0e0e0" stroke-width="1.1"/><path d="M18.5 11.5 L17 17 L13.5 13.5Z" fill="#e0e0e0"/></svg>
<svg class="r" style="left:925px;top:144px;" width="20" height="21" viewBox="0 0 20 21"><path d="M0.5 7 L5.5 1 H17 L12 7Z" fill="#d9d9d9" stroke="#3b4453" stroke-width="0.9"/><path d="M0.5 12 L5.5 6 H17 L12 12Z" fill="#d9d9d9" stroke="#3b4453" stroke-width="0.9"/><path d="M0.5 17 L5.5 11 H17 L12 17Z" fill="#d9d9d9" stroke="#3b4453" stroke-width="0.9"/><circle cx="14" cy="14" r="3.2" fill="#f8cf6a"/><path d="M14 8.5 V10 M14 18 V19.5 M8.5 14 H10 M18 14 H19.5 M10 10 L11 11 M17 17 L18 18 M18 10 L17 11 M10 18 L11 17" stroke="#f8cf6a" stroke-width="1.2"/></svg>
<svg class="r" style="left:955px;top:144px;" width="22" height="21" viewBox="0 0 22 21"><path d="M0.5 7.5 L5.6 0.5 H17.5 L12.399999999999999 7.5Z" fill="#d9d9d9"/><path d="M15 15 V12 C15 10 19 10 19 12 V13.5" fill="none" stroke="#f8cf6a" stroke-width="1.4"/><rect x="8" y="15" width="8.5" height="6" fill="#f8cf6a"/><rect x="11.5" y="16.5" width="1.2" height="3" fill="#3b4453"/></svg>
<svg class="r" style="left:985px;top:144px;" width="21" height="21" viewBox="0 0 21 21"><path d="M0.5 7 L5.5 1 H17 L12 7Z" fill="#d9d9d9" stroke="#3b4453" stroke-width="0.9"/><path d="M0.5 12 L5.5 6 H17 L12 12Z" fill="#d9d9d9" stroke="#3b4453" stroke-width="0.9"/><path d="M0.5 17 L5.5 11 H17 L12 17Z" fill="#d9d9d9" stroke="#3b4453" stroke-width="0.9"/><path d="M12 15 L17 10 L20 13 L15 18Z" fill="#e8e8e8"/><path d="M10 16 L14 20 L11.5 22 L8.5 19Z" fill="#f3c865"/></svg>
<div class="t" style="left:926.30px;top:176.75px;font-size:16px;font-family:'Liberation Sans',sans-serif;font-weight:normal;font-style:normal;color:#e6e6e6;transform:scaleX(0.8479)">Layers</div>
<svg class="r" style="left:974.4px;top:182.2px;" width="9" height="5" viewBox="0 0 9 5"><path d="M0 0H9 L4.5 5 Z" fill="#d6d6d6"/></svg>
<svg class="r" style="left:1131px;top:78px;" width="42" height="41" viewBox="0 0 42 41"><path d="M18 0.5 H33 L40.5 8 V30 H18Z" fill="#82c8f8"/><path d="M33 0.5 V8 H40.5Z" fill="#c6e6fb"/>
<rect x="3" y="13.5" width="24.5" height="18" fill="#6b7280" stroke="#a1a6ae" stroke-width="1.2"/>
<circle cx="27" cy="31" r="8.8" fill="#6b7280" stroke="#cfd2d6" stroke-width="1.2"/>
<path d="M27.5 22.5 V31.5 H19" fill="none" stroke="#a1a6ae" stroke-width="1.1"/>
<rect x="1" y="29.5" width="3.5" height="3.5" fill="#e0e0e0"/></svg>
<div class="t" style="left:1134.40px;top:126.25px;font-size:16px;font-family:'Liberation Sans',sans-serif;font-weight:normal;font-style:normal;color:#f2f2f2;transform:scaleX(0.8900)">Insert</div>
<svg class="r" style="left:1148.0px;top:146.55px;" width="8" height="4.5" viewBox="0 0 8 4.5"><path d="M0 0H8 L4.0 4.5 Z" fill="#d6d6d6"/></svg>
<svg class="r" style="left:1180px;top:82px;" width="21" height="20" viewBox="0 0 21 20"><rect x="1" y="6.5" width="12" height="8.5" fill="#6b7280" stroke="#9ca3af" stroke-width="1"/><circle cx="13" cy="15" r="3.8" fill="none" stroke="#b8bcc2" stroke-width="1"/><rect x="0" y="14" width="2" height="2" fill="#e0e0e0"/><path d="M15 0 L16 3 L19 1.5 L17.5 4.5 L20.5 5.5 L17.5 6.5 L19 9.5 L16 8 L15 11 L14 8 L11 9.5 L12.5 6.5 L9.5 5.5 L12.5 4.5 L11 1.5 L14 3Z" fill="#f8cf6a"/></svg>
<svg class="r" style="left:1180px;top:113px;" width="21" height="20" viewBox="0 0 21 20"><rect x="1" y="6.5" width="12" height="8.5" fill="#6b7280" stroke="#9ca3af" stroke-width="1"/><circle cx="15" cy="15" r="3.8" fill="none" stroke="#b8bcc2" stroke-width="1"/><rect x="0" y="14" width="2" height="2" fill="#e0e0e0"/><path d="M10 11 L17 3 L19.5 5.5 L12.5 13 L9.5 13.5Z" fill="#f3c865"/><path d="M17 3 L18.5 1.5 L21 4 L19.5 5.5Z" fill="#e94b55"/></svg>
<svg class="r" style="left:1180px;top:144px;" width="21" height="21" viewBox="0 0 21 21"><path d="M0.5 2.5 L2.5 0.5 H9 L18 9.5 L9.5 19.5 L0.5 10.5Z" fill="#d9d9d9"/><circle cx="4.5" cy="4.5" r="1.2" fill="#555"/><path d="M4 8 L10 14 M6.5 6.5 L12 12" stroke="#777" stroke-width="0.8"/><path d="M9.5 12 L17 3.5 L19.5 6 L12 14 L9 14.5Z" fill="#f3c865"/><path d="M17 3.5 L18.5 2 L21 4.5 L19.5 6Z" fill="#e94b55"/></svg>
<svg class="r" style="left:1210.0px;top:151.25px;" width="8" height="4.5" viewBox="0 0 8 4.5"><path d="M0 0H8 L4.0 4.5 Z" fill="#d6d6d6"/></svg>
<div class="t" style="left:1148.90px;top:176.75px;font-size:16px;font-family:'Liberation Sans',sans-serif;font-weight:normal;font-style:normal;color:#e6e6e6;transform:scaleX(0.8937)">Block</div>
<svg class="r" style="left:1192.5px;top:182.2px;" width="9" height="5" viewBox="0 0 9 5"><path d="M0 0H9 L4.5 5 Z" fill="#d6d6d6"/></svg>
<svg class="r" style="left:1245px;top:79px;" width="41" height="42" viewBox="0 0 41 42"><rect x="0.5" y="0.5" width="25.5" height="35" fill="#d9d9d9"/><rect x="3.5" y="3.5" width="19.5" height="12.5" fill="#82c8f8" stroke="#555" stroke-width="0.8"/>
<path d="M5 22 H21 M5 27.5 H21" stroke="#888" stroke-width="1"/><rect x="7.5" y="20" width="1.5" height="4" fill="#666"/><rect x="16" y="25.5" width="1.5" height="4" fill="#666"/>
<g transform="translate(30.8,31.3) rotate(-45)"><rect x="-6" y="-8" width="6.5" height="16" fill="#f8cf6a" stroke="#3b4453" stroke-width="0.9"/><rect x="0.9" y="-6" width="5.6" height="12" rx="1" fill="#efefef"/><rect x="6" y="-2.2" width="4.5" height="4.4" rx="1" fill="#efefef"/></g></svg>
<div class="t" style="left:1244.60px;top:127.25px;font-size:16px;font-family:'Liberation Sans',sans-serif;font-weight:normal;font-style:normal;color:#f2f2f2;transform:scaleX(0.9218)">Match</div>
<div class="t" style="left:1231.70px;top:147.25px;font-size:16px;font-family:'Liberation Sans',sans-serif;font-weight:normal;font-style:normal;color:#f2f2f2;transform:scaleX(0.9068)">Properties</div>
<svg class="r" style="left:1304px;top:81px;" width="22" height="22" viewBox="0 0 22 22"><g transform="translate(10.5,10.5) rotate(-30)">
<path d="M0 0 L0 -10.3 A10.3 10.3 0 0 1 8.92 -5.15Z" fill="#f7b42c"/>
<path d="M0 0 L8.92 -5.15 A10.3 10.3 0 0 1 8.92 5.15Z" fill="#f4893a"/>
<path d="M0 0 L8.92 5.15 A10.3 10.3 0 0 1 0 10.3Z" fill="#e65555"/>
<path d="M0 0 L0 10.3 A10.3 10.3 0 0 1 -8.92 5.15Z" fill="#8b5cf6"/>
<path d="M0 0 L-8.92 5.15 A10.3 10.3 0 0 1 -8.92 -5.15Z" fill="#1fb5d6"/>
<path d="M0 0 L-8.92 -5.15 A10.3 10.3 0 0 1 0 -10.3Z" fill="#4cc66b"/></g></svg>
<div class="r" style="left:1328px;top:78px;width:171px;height:28px;background:#4a5568;border:1px solid #262c36;box-sizing:border-box"></div>
<div class="r" style="left:1328px;top:109px;width:171px;height:28px;background:#4a5568;border:1px solid #262c36;box-sizing:border-box"></div>
<div class="r" style="left:1328px;top:140px;width:171px;height:28px;background:#4a5568;border:1px solid #262c36;box-sizing:border-box"></div>
<svg class="r" style="left:1337px;top:82px;" width="21" height="21" viewBox="0 0 21 21"><rect x="0.75" y="0.75" width="19.5" height="19.5" fill="#ff8000" stroke="#e0e0e0" stroke-width="1.5"/></svg>
<div class="t" style="left:1362.40px;top:85.75px;font-size:16px;font-family:'Liberation Sans',sans-serif;font-weight:normal;font-style:normal;color:#f2f2f2;transform:scaleX(0.8630)">ByLayer</div>
<svg class="r" style="left:1487.1px;top:89.8px;" width="9" height="5" viewBox="0 0 9 5"><path d="M0 0H9 L4.5 5 Z" fill="#d6d6d6"/></svg>
<svg class="r" style="left:1304px;top:113px;" width="21" height="20" viewBox="0 0 21 20"><rect x="0" y="0" width="20.5" height="2" fill="#d9d9d9"/><rect x="0" y="4.5" width="20.5" height="3" fill="#d9d9d9"/><rect x="0" y="10" width="20.5" height="3.5" fill="#d9d9d9"/><rect x="0" y="15.5" width="20.5" height="4.5" fill="#d9d9d9"/></svg>
<div class="r" style="left:1337px;top:121.5px;width:80px;height:1.5px;background:#f0f0f0"></div>
<div class="t" style="left:1419.60px;top:116.25px;font-size:16px;font-family:'Liberation Sans',sans-serif;font-weight:normal;font-style:normal;color:#f2f2f2;transform:scaleX(0.8613)">ByLayer</div>
<svg class="r" style="left:1486.1px;top:119.8px;" width="9" height="5" viewBox="0 0 9 5"><path d="M0 0H9 L4.5 5 Z" fill="#d6d6d6"/></svg>
<svg class="r" style="left:1304px;top:145px;" width="20" height="17" viewBox="0 0 20 17"><path d="M0 1 H20 M0 5.5 H20 M0 10.5 H20 M0 15.5 H20" stroke="#d9d9d9" stroke-width="1.3" stroke-dasharray="2.5 1.5"/><path d="M0 10.5 H20" stroke="#d9d9d9" stroke-width="1.3"/></svg>
<div class="r" style="left:1337px;top:153.5px;width:80px;height:1.5px;background:#f0f0f0"></div>
<div class="t" style="left:1419.60px;top:147.25px;font-size:16px;font-family:'Liberation Sans',sans-serif;font-weight:normal;font-style:normal;color:#f2f2f2;transform:scaleX(0.8613)">ByLayer</div>
<svg class="r" style="left:1486.1px;top:151.9px;" width="9" height="5" viewBox="0 0 9 5"><path d="M0 0H9 L4.5 5 Z" fill="#d6d6d6"/></svg>
<div class="t" style="left:1314.10px;top:176.75px;font-size:16px;font-family:'Liberation Sans',sans-serif;font-weight:normal;font-style:normal;color:#e6e6e6;transform:scaleX(0.9123)">Properties</div>
<svg class="r" style="left:1388.6px;top:182.2px;" width="9" height="5" viewBox="0 0 9 5"><path d="M0 0H9 L4.5 5 Z" fill="#d6d6d6"/></svg>
<svg class="r" style="left:1489px;top:179px;" width="9" height="9" viewBox="0 0 9 9"><path d="M1 1 L7.5 7.5 M7.5 2.5 V7.5 H2.5" fill="none" stroke="#d0d0d0" stroke-width="1.2"/></svg>
<svg class="r" style="left:1509px;top:80px;" width="40" height="41" viewBox="0 0 40 41"><path d="M6 3 H1 V38.5 H6 M27 25 V38.5 H22" fill="none" stroke="#d9d9d9" stroke-width="1.4"/>
<rect x="7.5" y="11" width="12.5" height="10.5" fill="#4f6e91" stroke="#7cc4f5" stroke-width="1.1"/>
<circle cx="13.5" cy="30" r="6.3" fill="#6b7280" stroke="#b8bcc2" stroke-width="1.1"/>
<path d="M29 0 L31 6 L36 2.5 L34 8.5 L39.5 10 L34 12 L36 17.5 L31 14 L29 20 L27 14 L22 17.5 L24 12 L18.5 10 L24 8.5 L22 2.5 L27 6Z" fill="#f8cf6a"/></svg>
<div class="t" style="left:1508.20px;top:127.25px;font-size:16px;font-family:'Liberation Sans',sans-serif;font-weight:normal;font-style:normal;color:#f2f2f2;transform:scaleX(0.9146)">Group</div>
<svg class="r" style="left:1558px;top:82px;" width="20" height="21" viewBox="0 0 20 21"><path d="M12 0.6 H14.5 V19.4 H12" fill="none" stroke="#d9d9d9" stroke-width="1.1"/><rect x="1" y="2" width="7" height="6" fill="#4f6e91" stroke="#7cc4f5" stroke-width="1"/><circle cx="4.5" cy="13.5" r="3.6" fill="#6b7280" stroke="#b8bcc2" stroke-width="1"/><path d="M11 8 L18 15 M18 8 L11 15" stroke="#ff4444" stroke-width="1.8"/></svg>
<svg class="r" style="left:1557px;top:113px;" width="22" height="21" viewBox="0 0 22 21"><path d="M3 0.6 H0.6 V17.5 H3 M10.5 0.6 H13 V9" fill="none" stroke="#d9d9d9" stroke-width="1.1"/><rect x="4" y="2.5" width="6" height="5" fill="#4f6e91" stroke="#7cc4f5" stroke-width="1"/><circle cx="7" cy="13" r="3" fill="#6b7280" stroke="#b8bcc2" stroke-width="1"/><path d="M10 19 L17 11.5 L19.5 14 L12.5 21 L9.5 21.5Z" fill="#f3c865"/><path d="M17 11.5 L18.5 10 L21 12.5 L19.5 14Z" fill="#e94b55"/></svg>
<div class="r" style="left:1554px;top:140px;width:29px;height:27px;background:#4a5a73;border:1px solid #6ec0f5;box-sizing:border-box"></div>
<svg class="r" style="left:1558px;top:144px;" width="20" height="20" viewBox="0 0 20 20"><path d="M3 0.6 H0.6 V17.5 H3 M9 0.6 H11.5 V6" fill="none" stroke="#d9d9d9" stroke-width="1.1"/><rect x="3.5" y="2.5" width="6" height="5" fill="none" stroke="#58c878" stroke-width="1.1"/><circle cx="6.5" cy="13" r="3" fill="none" stroke="#58c878" stroke-width="1.1"/><path d="M11 9.5 V19 L13.3 16.8 L15.2 20 L16.8 19.2 L15 16 H18Z" fill="#f0f0f0"/></svg>
<div class="t" style="left:1513.50px;top:176.75px;font-size:16px;font-family:'Liberation Sans',sans-serif;font-weight:normal;font-style:normal;color:#e6e6e6;transform:scaleX(0.8857)">Groups</div>
<svg class="r" style="left:1567.5px;top:182.2px;" width="9" height="5" viewBox="0 0 9 5"><path d="M0 0H9 L4.5 5 Z" fill="#d6d6d6"/></svg>
<svg class="r" style="left:1614px;top:95px;" width="36" height="10" viewBox="0 0 36 10"><rect x="0" y="0.5" width="35.5" height="9" fill="#f8cf6a"/><path d="M3 0.5 V3.5 M6.5 0.5 V5 M10 0.5 V3.5 M13.5 0.5 V5 M17 0.5 V3.5 M20.5 0.5 V5 M24 0.5 V3.5 M27.5 0.5 V5 M31 0.5 V3.5" stroke="#7a6230" stroke-width="0.8"/></svg>
<div class="t" style="left:1604.80px;top:128.25px;font-size:16px;font-family:'Liberation Sans',sans-serif;font-weight:normal;font-style:normal;color:#f2f2f2;transform:scaleX(0.8867)">Measure</div>
<svg class="r" style="left:1628.0px;top:148.35px;" width="8" height="4.5" viewBox="0 0 8 4.5"><path d="M0 0H8 L4.0 4.5 Z" fill="#d6d6d6"/></svg>
<svg class="r" style="left:1678px;top:82px;" width="22" height="21" viewBox="0 0 22 21"><rect x="8.5" y="8" width="12.5" height="12" fill="#e8e8e8"/><path d="M11 11 H12 M11 14 H12 M11 17 H12 M13.5 11 H19 M13.5 14 H19 M13.5 17 H19" stroke="#4a9ed9" stroke-width="1.2"/><path d="M1 6 V18 L3.8 15.5 L6 20 L8 19 L6 14.5 H9.5Z" fill="#f0f0f0"/><path d="M7 0 L4 4.5 H7 L5.5 8 L10 3 H7.5 L9 0Z" fill="#f8cf6a"/></svg>
<svg class="r" style="left:1678px;top:113px;" width="22" height="21" viewBox="0 0 22 21"><rect x="0.6" y="0.6" width="18" height="18" fill="none" stroke="#58c878" stroke-width="1.1" stroke-dasharray="2 1.2"/><rect x="5" y="2.5" width="12" height="9" fill="#6fcf8f"/><rect x="2.5" y="7" width="10" height="9.5" fill="#58c878" stroke="#3b4453" stroke-width="0.8"/><path d="M12 9 V20 L14.5 17.5 L16.5 21 L18.3 20 L16.5 16.7 H20Z" fill="#f0f0f0"/></svg>
<svg class="r" style="left:1680px;top:144px;" width="16" height="20" viewBox="0 0 16 20"><rect x="0.5" y="0.5" width="15" height="19.5" fill="#d9d9d9"/><rect x="2.5" y="2.5" width="11" height="3.5" fill="#777"/><path d="M2.5 8 H13.5 M2.5 11 H13.5 M2.5 14 H13.5 M2.5 17 H13.5" stroke="#888" stroke-width="1.6" stroke-dasharray="2.2 1"/></svg>
<div class="t" style="left:1614.80px;top:176.75px;font-size:16px;font-family:'Liberation Sans',sans-serif;font-weight:normal;font-style:normal;color:#e6e6e6;transform:scaleX(0.9495)">Utilities</div>
<svg class="r" style="left:1672.5px;top:182.2px;" width="9" height="5" viewBox="0 0 9 5"><path d="M0 0H9 L4.5 5 Z" fill="#d6d6d6"/></svg>
<svg class="r" style="left:1725px;top:80px;" width="34" height="42" viewBox="0 0 34 42"><path d="M0.5 5 H28 V35 H0.5Z" fill="#d8ad72"/><path d="M8 3.5 C8 1.5 10 0.5 13.5 0.5 C17 0.5 19.5 1.5 19.5 3.5 H21.5 V6.5 H6 V3.5Z" fill="#f0f0f0"/>
<path d="M9.5 12.5 H24 L32.5 21 V40.5 H9.5Z" fill="#d9d9d9" stroke="#3b4453" stroke-width="1"/><path d="M24 12.5 V21 H32.5" fill="#f0f0f0"/></svg>
<div class="t" style="left:1725.70px;top:128.75px;font-size:16px;font-family:'Liberation Sans',sans-serif;font-weight:normal;font-style:normal;color:#f2f2f2;transform:scaleX(0.8098)">Paste</div>
<svg class="r" style="left:1738.2px;top:149.45px;" width="8" height="4.5" viewBox="0 0 8 4.5"><path d="M0 0H8 L4.0 4.5 Z" fill="#d6d6d6"/></svg>
<svg class="r" style="left:1777px;top:82px;" width="22" height="21" viewBox="0 0 22 21"><rect x="0.5" y="0.5" width="15" height="17" fill="#d9d9d9"/><path d="M3 4 H12 M3 7.5 H12 M3 11 H9" stroke="#999" stroke-width="1"/><path d="M9 5 L16 15 M19.5 5 L12.5 15" stroke="#f0f0f0" stroke-width="1.4"/><circle cx="11.5" cy="17.5" r="2.3" fill="#3b4453" stroke="#f0f0f0" stroke-width="1.2"/><circle cx="17" cy="17.5" r="2.3" fill="#3b4453" stroke="#f0f0f0" stroke-width="1.2"/></svg>
<svg class="r" style="left:1804.1px;top:90.05px;" width="8" height="4.5" viewBox="0 0 8 4.5"><path d="M0 0H8 L4.0 4.5 Z" fill="#d6d6d6"/></svg>
<svg class="r" style="left:1780px;top:113px;" width="17" height="21" viewBox="0 0 17 21"><path d="M0.5 0.5 H8 L11 3.5 V16 H0.5Z" fill="#d9d9d9" stroke="#3b4453" stroke-width="1"/><path d="M4.5 4.5 H12 L16 8.5 V20.5 H4.5Z" fill="#d9d9d9" stroke="#3b4453" stroke-width="1"/><path d="M12 4.5 V8.5 H16" fill="#f0f0f0"/></svg>
<svg class="r" style="left:1804.1px;top:121.25px;" width="8" height="4.5" viewBox="0 0 8 4.5"><path d="M0 0H8 L4.0 4.5 Z" fill="#d6d6d6"/></svg>
<div class="t" style="left:1732.40px;top:176.75px;font-size:16px;font-family:'Liberation Sans',sans-serif;font-weight:normal;font-style:normal;color:#e6e6e6;transform:scaleX(0.9504)">Clipboard</div>
<svg class="r" style="left:1840px;top:84px;" width="42" height="32" viewBox="0 0 42 32"><path d="M0.5 0.5 H17.5 V13.5 H41 V30.5 H0.5Z" fill="#d9d9d9"/></svg>
<div class="t" style="left:1845.80px;top:128.25px;font-size:16px;font-family:'Liberation Sans',sans-serif;font-weight:normal;font-style:normal;color:#f2f2f2;transform:scaleX(0.8274)">Base</div>
<svg class="r" style="left:1857.0px;top:147.15px;" width="8" height="4.5" viewBox="0 0 8 4.5"><path d="M0 0H8 L4.0 4.5 Z" fill="#d6d6d6"/></svg>
<div class="t" style="left:1828.30px;top:176.75px;font-size:16px;font-family:'Liberation Sans',sans-serif;font-weight:normal;font-style:normal;color:#e6e6e6;transform:scaleX(0.9043)">View</div>
<svg class="r" style="left:1868.3px;top:182.2px;" width="9" height="5" viewBox="0 0 9 5"><path d="M0 0H9 L4.5 5 Z" fill="#d6d6d6"/></svg>
<svg class="r" style="left:1887px;top:179px;" width="9" height="9" viewBox="0 0 9 9"><path d="M1 1 L7.5 7.5 M7.5 2.5 V7.5 H2.5" fill="none" stroke="#d0d0d0" stroke-width="1.2"/></svg>
<svg class="r" style="left:26px;top:206px;" width="20" height="16" viewBox="0 0 20 16"><rect x="0" y="0" width="20" height="2.6" fill="#e8e8e8"/><rect x="0" y="6.5" width="20" height="2.6" fill="#e8e8e8"/><rect x="0" y="13" width="20" height="2.6" fill="#e8e8e8"/></svg>
<svg class="r" style="left:59px;top:204px;" width="10" height="20" viewBox="0 0 10 20"><path d="M0.5 19.5 L9 0.5" stroke="#4b5260" stroke-width="1.2"/></svg>
<div class="t" style="left:78.20px;top:207.75px;font-size:16px;font-family:'Liberation Sans',sans-serif;font-weight:normal;font-style:normal;color:#f2f2f2;transform:scaleX(0.9037)">Start</div>
<svg class="r" style="left:118px;top:199px;" width="151" height="30" viewBox="0 0 151 30"><path d="M11.5 0 H150.5 L139 29.5 H0Z" fill="#3b4453"/></svg>
<div class="t" style="left:139.30px;top:207.75px;font-size:16px;font-family:'Liberation Sans',sans-serif;font-weight:bold;font-style:normal;color:#ffffff;transform:scaleX(0.9274)">frequencia 1*</div>
<svg class="r" style="left:244px;top:209px;" width="11" height="11" viewBox="0 0 11 11"><path d="M1 1 L10 10 M10 1 L1 10" stroke="#a9aeb6" stroke-width="2"/></svg>
<svg class="r" style="left:281px;top:205px;" width="19" height="19" viewBox="0 0 19 19"><path d="M9.5 0.5 V18.5 M0.5 9.5 H18.5" stroke="#e8e8e8" stroke-width="2.4"/></svg>
<svg class="r" style="left:310px;top:204px;" width="10" height="20" viewBox="0 0 10 20"><path d="M0.5 19.5 L9 0.5" stroke="#4b5260" stroke-width="1.2"/></svg>
<div class="r" style="left:799px;top:335px;width:354px;height:500px;background:#ffffff;box-shadow:0 0 3px 1px rgba(0,0,0,0.12)"></div>
<div class="r" style="left:798px;top:234px;width:1px;height:740px;background:#99a9d9"></div>
<div class="r" style="left:6px;top:836px;width:1907px;height:1px;background:#99a9d9"></div>
<div class="r" style="left:18px;top:442px;width:97px;height:1px;background:#111"></div>
<div class="r" style="left:66px;top:394px;width:1px;height:97px;background:#111"></div>
<div class="r" style="left:64px;top:440px;width:5px;height:5px;border:1px solid #111;box-sizing:border-box;background:#8c8c8c"></div>
<svg class="r" style="left:18px;top:850px;" width="68" height="112" viewBox="0 0 68 112"><path d="M2.3 2.3 V109.4 H64.7 Z" fill="none" stroke="#2247f0" stroke-width="1.3"/><path d="M2.3 100 H11.3 V109.4" fill="none" stroke="#2247f0" stroke-width="1.2"/><path d="M4.3 31 L11.3 38.4 L18 31 M11.3 38.4 V46" fill="none" stroke="#2247f0" stroke-width="1.2"/><path d="M39.4 93.4 L53.7 107.4 M39.4 107.4 L53.7 93.4" stroke="#2247f0" stroke-width="1.2"/></svg>
<svg class="r" style="left:1837px;top:252px;" width="15" height="6" viewBox="0 0 15 6"><rect x="0.6" y="0.6" width="13.8" height="4.8" fill="#f0f0f0" stroke="#3a3f4a" stroke-width="1.2"/></svg>
<svg class="r" style="left:1861px;top:243px;" width="17" height="17" viewBox="0 0 17 17"><rect x="4" y="1" width="12" height="12" fill="#f0f0f0" stroke="#3a3f4a" stroke-width="1.2"/><rect x="1" y="4" width="12" height="12" fill="#f0f0f0" stroke="#3a3f4a" stroke-width="1.2"/><rect x="4.5" y="7.5" width="5" height="5" fill="#7a7a7a" stroke="#3a3f4a" stroke-width="1"/></svg>
<svg class="r" style="left:1886px;top:244px;" width="16" height="15" viewBox="0 0 16 15"><path d="M3.2 3.2 L12.3 11.6 M12.3 3.2 L3.2 11.6" stroke="#3a3f4a" stroke-width="4.2"/><path d="M3.2 3.2 L12.3 11.6 M12.3 3.2 L3.2 11.6" stroke="#f0f0f0" stroke-width="2.6"/></svg>
<svg class="r" style="left:790px;top:325px;" width="370" height="520" viewBox="790 325 370 520"><path d="M918.5 355.5 H1049.5 V372.5 H1016.5 V396 H1014.5 V361.5 H991.5 V393.5 H975.5 V469" fill="none" stroke="#f5f500" stroke-width="1.3"/><path d="M918.5 356.5 H931.5 V368.5 H952 V469" fill="none" stroke="#f5f500" stroke-width="1.3"/><path d="M906 469 H1060" stroke="#f5f500" stroke-width="2"/><path d="M918.5 340 V355 M1049.5 340 V355" stroke="#848484" stroke-width="1"/><path d="M918.5 349.5 H953.5 M990.5 349.5 H1049.5" stroke="#848484" stroke-width="1"/><path d="M913.0 354.5 L923.5 344.5 M1044.0 354.5 L1054.5 344.5" stroke="#6e6e6e" stroke-width="2.2"/><path d="M1051.5 355 H1073 M1051.5 469 H1073" stroke="#848484" stroke-width="1"/><path d="M1063.5 355 V405 M1063.5 420.5 V469" stroke="#848484" stroke-width="1"/><path d="M1058.5 350 L1068.5 360 M1058.5 464 L1068.5 474" stroke="#6e6e6e" stroke-width="2.2"/><path d="M904.5 507.5 H1030.5 V519.5 H1019.5 V597.5 H999.5 V545.5 H984.5 V537.5 H977.5 V546 H946.5 V548.5 H936.5 V513.5 H904.5 Z" fill="none" stroke="#ff8a1c" stroke-width="1.3"/><path d="M966.5 511 V546" stroke="#ff8a1c" stroke-width="2"/><path d="M893 621 H1043.5" stroke="#ff8a1c" stroke-width="2"/><path d="M904.5 492.5 V507 M1030.5 492.5 V507" stroke="#848484" stroke-width="1"/><path d="M904.5 501.5 H954 M992 501.5 H1030.5" stroke="#848484" stroke-width="1"/><path d="M899.0 506.5 L909.5 496.5 M1025.0 506.5 L1035.5 496.5" stroke="#6e6e6e" stroke-width="2.2"/><path d="M1033 507.5 H1069.5 M1033 621.5 H1069.5" stroke="#848484" stroke-width="1"/><path d="M1060.5 507.5 V557 M1060.5 572 V621.5" stroke="#848484" stroke-width="1"/><path d="M1055.5 502.5 L1065.5 512.5 M1055.5 616.5 L1065.5 626.5" stroke="#6e6e6e" stroke-width="2.2"/><path d="M917.5 653.5 A141 141 0 0 1 1058.5 794.5" fill="none" stroke="#ff1a1a" stroke-width="1.5"/><path d="M917.5 653 V794.5 H1058.5 V785.5" fill="none" stroke="#ff1a1a" stroke-width="1.8"/><path d="M918 659.5 A24 24 0 0 1 942 683.5" fill="none" stroke="#ff1a1a" stroke-width="1.2"/><path d="M945.5 656.5 Q935 668 942 684.5 V677" fill="none" stroke="#ff1a1a" stroke-width="1.2"/><path d="M918 706.5 Q935 705 940.5 691 L942.3 693 V711.2 H961.5 L946.3 722.5 L948 728.4 L945.3 730.5 Q935 719 918 721.5" fill="none" stroke="#ff1a1a" stroke-width="1.2"/><path d="M918 776.7 Q937 779 944.9 767.4 Q949 771 955.5 773.2 Q940 780 951.5 791.3 V794" fill="none" stroke="#ff1a1a" stroke-width="1.2"/><path d="M968 662.5 L970.5 668.5 L971.5 663.5" fill="none" stroke="#ff1a1a" stroke-width="1.1"/><path d="M979 679.3 H988.7 Q987 684 989.1 689.2 L987.4 691.4 L992.2 699.3 H997.5 V703.3 Q1000 716 1012.5 718.3 Q1006 730 1016.1 741.9 Q1010 750 1024 760.7 L1038.2 785.7 H1058.5" fill="none" stroke="#ff1a1a" stroke-width="1.2"/><path d="M979 679.3 V699.7 H990.5 V717 L997.5 721.8 L988.3 751.2 L986.5 752.5 L982.1 762.2" fill="none" stroke="#ff1a1a" stroke-width="1.2"/><path d="M982.1 762.2 Q1005 765 1007.2 794" fill="none" stroke="#ff1a1a" stroke-width="1.2"/><path d="M981.5 645 V813.5" stroke="#1010f0" stroke-width="1.4"/><path d="M815 741.5 H1137.5" stroke="#1010f0" stroke-width="1.4"/><path d="M880 653.5 H914.5 M880 794.5 H914.5" stroke="#848484" stroke-width="1"/><path d="M890 653.5 V715.5 M890 731 V794.5" stroke="#848484" stroke-width="1"/><path d="M885 648.5 L895 658.5 M885 789.5 L895 799.5" stroke="#6e6e6e" stroke-width="2.2"/><path d="M917.5 797.5 V831 M1059 797.5 V831" stroke="#848484" stroke-width="1"/><path d="M917.5 821.5 H970.5 M1006.5 821.5 H1059" stroke="#848484" stroke-width="1"/><path d="M912.0 826.5 L922.5 816.5 M1053.5 826.5 L1064 816.5" stroke="#6e6e6e" stroke-width="2.2"/></svg>
<div class="t" style="left:807.80px;top:341.53px;font-size:10px;font-family:'Liberation Serif',sans-serif;font-weight:normal;font-style:normal;color:#000;transform:scaleX(1.0116)">Corte Longitudinal AA'</div>
<div class="t" style="left:808.70px;top:496.73px;font-size:10px;font-family:'Liberation Serif',sans-serif;font-weight:normal;font-style:normal;color:#000;transform:scaleX(1.0090)">Corte Transversal BB'</div>
<div class="t" style="left:809.00px;top:648.83px;font-size:10px;font-family:'Liberation Serif',sans-serif;font-weight:normal;font-style:normal;color:#000;transform:scaleX(1.0050)">Planta Corte</div>
<div class="t" style="left:1089.90px;top:813.73px;font-size:10px;font-family:'Liberation Serif',sans-serif;font-weight:normal;font-style:normal;color:#000;transform:scaleX(0.9854)">Escala 1:300</div>
<div class="t" style="left:982.70px;top:644.94px;font-size:7px;font-family:'Liberation Serif',sans-serif;font-weight:normal;font-style:normal;color:#222;transform:scaleX(1.1071)">Corte BB'</div>
<div class="t" style="left:1104.40px;top:734.34px;font-size:7px;font-family:'Liberation Serif',sans-serif;font-weight:normal;font-style:normal;color:#222;transform:scaleX(1.1292)">Corte AA'</div>
<div class="t" style="left:957.60px;top:345.47px;font-size:7px;font-family:'Liberation Sans',sans-serif;font-weight:normal;font-style:normal;color:#1a1a1a;transform:scaleX(1.0459)">23,196m</div>
<div class="t" style="left:1048.70px;top:408.07px;font-size:7px;font-family:'Liberation Sans',sans-serif;font-weight:normal;font-style:normal;color:#1a1a1a;transform:scaleX(1.0202)">20,200m</div>
<div class="t" style="left:958.70px;top:497.37px;font-size:7px;font-family:'Liberation Sans',sans-serif;font-weight:normal;font-style:normal;color:#1a1a1a;transform:scaleX(1.0055)">22,319m</div>
<div class="t" style="left:1045.50px;top:560.87px;font-size:7px;font-family:'Liberation Sans',sans-serif;font-weight:normal;font-style:normal;color:#1a1a1a;transform:scaleX(1.0092)">20,200m</div>
<div class="t" style="left:876.60px;top:719.97px;font-size:7px;font-family:'Liberation Sans',sans-serif;font-weight:normal;font-style:normal;color:#1a1a1a;transform:scaleX(1.0202)">25,000m</div>
<div class="t" style="left:974.00px;top:818.87px;font-size:7px;font-family:'Liberation Sans',sans-serif;font-weight:normal;font-style:normal;color:#1a1a1a">25,000m</div>
<div class="r" style="left:445px;top:939px;width:73px;height:34px;background:#474e5a;border-radius:4px 0 0 4px"></div>
<div class="r" style="left:517px;top:939px;width:958px;height:34px;background:#dcdcdc;border:1px solid #3a3f47;border-left:none;border-radius:0 4px 4px 0;box-sizing:border-box"></div>
<svg class="r" style="left:449px;top:944px;" width="8" height="22" viewBox="0 0 8 22"><rect x="1" y="1" width="1.6" height="1.6" fill="#e0e0e0"/><rect x="1" y="4.5" width="1.6" height="1.6" fill="#e0e0e0"/><rect x="1" y="8" width="1.6" height="1.6" fill="#e0e0e0"/><rect x="1" y="11.5" width="1.6" height="1.6" fill="#e0e0e0"/><rect x="1" y="15" width="1.6" height="1.6" fill="#e0e0e0"/><rect x="1" y="18.5" width="1.6" height="1.6" fill="#e0e0e0"/><rect x="5" y="1" width="1.6" height="1.6" fill="#e0e0e0"/><rect x="5" y="4.5" width="1.6" height="1.6" fill="#e0e0e0"/><rect x="5" y="8" width="1.6" height="1.6" fill="#e0e0e0"/><rect x="5" y="11.5" width="1.6" height="1.6" fill="#e0e0e0"/><rect x="5" y="15" width="1.6" height="1.6" fill="#e0e0e0"/><rect x="5" y="18.5" width="1.6" height="1.6" fill="#e0e0e0"/></svg>
<svg class="r" style="left:464px;top:948px;" width="12" height="12" viewBox="0 0 12 12"><path d="M1 1 L11 11 M11 1 L1 11" stroke="#f0f0f0" stroke-width="2"/></svg>
<svg class="r" style="left:491px;top:945px;" width="20" height="20" viewBox="0 0 20 20"><path d="M2 18 L11 9" stroke="#e8e8e8" stroke-width="3" stroke-linecap="round"/><path d="M10 10 C8 6 10 1 15 1 L12.5 4 L14 6.5 L17 7 L19.5 4.5 C19.5 9 16 12 10.5 10Z" fill="#e8e8e8"/></svg>
<svg class="r" style="left:522px;top:948px;" width="21" height="16" viewBox="0 0 21 16"><rect x="0.5" y="0.5" width="19.5" height="14.5" fill="none" stroke="#666" stroke-width="1.1"/><rect x="0.5" y="0.5" width="19.5" height="3" fill="#666"/><path d="M3 7 L6 9 L3 11 M7 12 H11" fill="none" stroke="#666" stroke-width="0.9"/></svg>
<svg class="r" style="left:544px;top:954px;" width="10" height="5" viewBox="0 0 10 5"><path d="M0 0H10 L5 5Z" fill="#666"/></svg>
<div class="t" style="left:563.70px;top:949.66px;font-size:14.8px;font-family:'Liberation Mono',sans-serif;font-weight:normal;font-style:italic;color:#7c7c7c">Type a command</div>
<svg class="r" style="left:1457px;top:953px;" width="11" height="6" viewBox="0 0 11 6"><path d="M0 6 H11 L5.5 0Z" fill="#777"/></svg>
<div class="r" style="left:798px;top:940px;width:1px;height:32px;background:rgba(235,240,255,0.55)"></div>
<svg class="r" style="left:26px;top:986px;" width="20" height="16" viewBox="0 0 20 16"><rect x="0" y="0" width="20" height="2.6" fill="#e8e8e8"/><rect x="0" y="6.5" width="20" height="2.6" fill="#e8e8e8"/><rect x="0" y="13" width="20" height="2.6" fill="#e8e8e8"/></svg>
<svg class="r" style="left:59px;top:984px;" width="10" height="20" viewBox="0 0 10 20"><path d="M0.5 19.5 L9 0.5" stroke="#4b5260" stroke-width="1.2"/></svg>
<div class="t" style="left:79.70px;top:987.55px;font-size:16px;font-family:'Liberation Sans',sans-serif;font-weight:normal;font-style:normal;color:#f2f2f2;transform:scaleX(0.9563)">Model</div>
<svg class="r" style="left:131px;top:979px;" width="62" height="30" viewBox="0 0 62 30"><path d="M12 0 H61.5 L49.5 29.5 H0Z" fill="#3b4453"/></svg>
<div class="t" style="left:152.00px;top:987.55px;font-size:16px;font-family:'Liberation Sans',sans-serif;font-weight:bold;font-style:normal;color:#ffffff;transform:scaleX(0.9756)">A4</div>
<svg class="r" style="left:205px;top:985px;" width="18" height="18" viewBox="0 0 18 18"><path d="M9 0.5 V17.5 M0.5 9 H17.5" stroke="#e8e8e8" stroke-width="2.4"/></svg>
<svg class="r" style="left:235px;top:984px;" width="10" height="20" viewBox="0 0 10 20"><path d="M0.5 19.5 L9 0.5" stroke="#4b5260" stroke-width="1.2"/></svg>
<div class="r" style="left:1268px;top:981px;width:52px;height:30px;background:#3b4453"></div>
<div class="r" style="left:1323px;top:981px;width:30px;height:30px;background:#3b4453"></div>
<div class="r" style="left:1354px;top:981px;width:130px;height:30px;background:#3b4453"></div>
<div class="r" style="left:1485px;top:981px;width:80px;height:30px;background:#3b4453"></div>
<div class="r" style="left:1568px;top:981px;width:90px;height:30px;background:#3b4453"></div>
<div class="r" style="left:1661px;top:981px;width:50px;height:30px;background:#3b4453"></div>
<div class="r" style="left:1712px;top:981px;width:30px;height:30px;background:#3b4453"></div>
<div class="r" style="left:1745px;top:981px;width:31px;height:30px;background:#3b4453"></div>
<div class="r" style="left:1779px;top:981px;width:68px;height:30px;background:#3b4453"></div>
<div class="r" style="left:1850px;top:981px;width:29px;height:30px;background:#3b4453"></div>
<div class="r" style="left:1881px;top:981px;width:30px;height:30px;background:#3b4453"></div>
<div class="t" style="left:1272.90px;top:989.55px;font-size:16px;font-family:'Liberation Sans',sans-serif;font-weight:normal;font-style:normal;color:#f2f2f2;transform:scaleX(0.8113)">PAPER</div>
<svg class="r" style="left:1328px;top:987px;" width="21" height="19" viewBox="0 0 21 19"><path d="M4.5 0 V9 M0 4.5 H9" stroke="#d9d9d9" stroke-width="1.2"/><rect x="7.5" y="11" width="13" height="6" fill="#d9d9d9" stroke="#3b4453" stroke-width="0.6"/><rect x="7.5" y="11" width="3" height="6" fill="none" stroke="#d9d9d9" stroke-width="1"/></svg>
<svg class="r" style="left:1359px;top:986px;" width="21" height="21" viewBox="0 0 21 21"><path d="M0.8 0 V19.8 H20" fill="none" stroke="#d9d9d9" stroke-width="1.3"/><path d="M0.8 13.5 H6.5 V19.8" fill="none" stroke="#d9d9d9" stroke-width="1.1"/></svg>
<div class="r" style="left:1385px;top:982px;width:28px;height:28px;background:#5b8dc6"></div>
<svg class="r" style="left:1388px;top:986px;" width="21" height="20" viewBox="0 0 21 20"><circle cx="8.5" cy="11" r="8" fill="none" stroke="#f0f0f0" stroke-width="1.2"/><path d="M8.5 11 H20 M8.5 11 L16 0.5" stroke="#f0f0f0" stroke-width="1.2"/></svg>
<svg class="r" style="left:1419.7px;top:992px;" width="9" height="5" viewBox="0 0 9 5"><path d="M0 0H9 L4.5 5Z" fill="#d6d6d6"/></svg>
<svg class="r" style="left:1441px;top:986px;" width="16" height="20" viewBox="0 0 16 20"><path d="M8.5 0 V19" stroke="#58c878" stroke-width="1.2"/><path d="M0.5 2 L15.5 17.5" stroke="#e05050" stroke-width="1.2"/><rect x="6.5" y="7.5" width="4" height="4" fill="#3b4453" stroke="#d9d9d9" stroke-width="1"/></svg>
<svg class="r" style="left:1469.6px;top:992px;" width="9" height="5" viewBox="0 0 9 5"><path d="M0 0H9 L4.5 5Z" fill="#d6d6d6"/></svg>
<svg class="r" style="left:1490px;top:988px;" width="21" height="16" viewBox="0 0 21 16"><path d="M0.5 15 H20.5" stroke="#bdbdbd" stroke-width="1.6"/><path d="M0.5 15 L14 2.5" stroke="#d9d9d9" stroke-width="1.2"/><rect x="7" y="6.5" width="3.5" height="3.5" fill="#d9d9d9"/></svg>
<div class="r" style="left:1516px;top:982px;width:28px;height:28px;background:#5b8dc6"></div>
<svg class="r" style="left:1520px;top:985px;" width="21" height="22" viewBox="0 0 21 22"><rect x="3.5" y="3.5" width="17" height="17.5" fill="none" stroke="#f0f0f0" stroke-width="1.3"/><rect x="0.6" y="0.6" width="6" height="6" fill="#5b8dc6" stroke="#f0f0f0" stroke-width="1.1"/></svg>
<svg class="r" style="left:1550.5px;top:992px;" width="9" height="5" viewBox="0 0 9 5"><path d="M0 0H9 L4.5 5Z" fill="#d6d6d6"/></svg>
<svg class="r" style="left:1572px;top:986px;" width="22" height="21" viewBox="0 0 22 21"><rect x="0.6" y="0.6" width="20.5" height="19.5" fill="none" stroke="#d9d9d9" stroke-width="1.1" stroke-dasharray="3 2"/><rect x="8.5" y="8" width="10" height="9" fill="none" stroke="#d9d9d9" stroke-width="1.4"/><path d="M3 3 L8 8" stroke="#d9d9d9" stroke-width="1.1"/><path d="M1.5 1.5 H6 L1.5 6Z" fill="#d9d9d9"/></svg>
<svg class="r" style="left:1602px;top:986px;" width="21" height="20" viewBox="0 0 21 20"><path d="M7 0 L11.5 12 L14 19 L7 14 L0 19 L2.5 12Z" fill="#d9d9d9"/><circle cx="17" cy="4" r="3.3" fill="none" stroke="#d9d9d9" stroke-width="1.1"/></svg>
<svg class="r" style="left:1632px;top:986px;" width="21" height="20" viewBox="0 0 21 20"><path d="M7 0 L11.5 12 L14 19 L7 14 L0 19 L2.5 12Z" fill="#d9d9d9"/><path d="M17 0 L13.5 5.5 H16.5 L14.5 10 L20 4 H17.5 L19.5 0Z" fill="#d9d9d9"/></svg>
<svg class="r" style="left:1666px;top:986px;" width="21" height="21" viewBox="0 0 21 21"><g transform="translate(10.3,10.3)"><circle r="7.3" fill="#d9d9d9"/><circle r="3" fill="#3b4453"/><rect x="-2" y="-10.3" width="4" height="4.5" fill="#d9d9d9" transform="rotate(0)"/><rect x="-2" y="-10.3" width="4" height="4.5" fill="#d9d9d9" transform="rotate(45)"/><rect x="-2" y="-10.3" width="4" height="4.5" fill="#d9d9d9" transform="rotate(90)"/><rect x="-2" y="-10.3" width="4" height="4.5" fill="#d9d9d9" transform="rotate(135)"/><rect x="-2" y="-10.3" width="4" height="4.5" fill="#d9d9d9" transform="rotate(180)"/><rect x="-2" y="-10.3" width="4" height="4.5" fill="#d9d9d9" transform="rotate(225)"/><rect x="-2" y="-10.3" width="4" height="4.5" fill="#d9d9d9" transform="rotate(270)"/><rect x="-2" y="-10.3" width="4" height="4.5" fill="#d9d9d9" transform="rotate(315)"/></g></svg>
<svg class="r" style="left:1696.8px;top:992px;" width="9" height="5" viewBox="0 0 9 5"><path d="M0 0H9 L4.5 5Z" fill="#d6d6d6"/></svg>
<svg class="r" style="left:1717px;top:986px;" width="19" height="20" viewBox="0 0 19 20"><path d="M9.5 0.5 V19.5 M0 9.7 H19" stroke="#e0e0e0" stroke-width="2.4"/></svg>
<svg class="r" style="left:1750px;top:986px;" width="21" height="21" viewBox="0 0 21 21"><rect x="0.6" y="0.6" width="7.5" height="7.5" fill="none" stroke="#d9d9d9" stroke-width="1.1"/><circle cx="15.5" cy="9" r="4" fill="none" stroke="#d9d9d9" stroke-width="1.1"/><path d="M7 12 L11 19.5 H3Z" fill="none" stroke="#d9d9d9" stroke-width="1.1"/></svg>
<svg class="r" style="left:1782px;top:984px;" width="27" height="24" viewBox="0 0 27 24"><path d="M2 2 H16 L22 8 V15 H2Z" fill="#3a7cc2"/><path d="M8 1 V13 M2 7 H14" stroke="#d9e8f5" stroke-width="1.2"/><circle cx="8" cy="7" r="1.5" fill="#7ec4f7"/><rect x="2" y="13.5" width="11" height="6" fill="#f2c53d"/><path d="M12 17 L16 21 L24 12.5" fill="none" stroke="#4cc66b" stroke-width="2.6"/></svg>
<svg class="r" style="left:1816px;top:986px;" width="22" height="20" viewBox="0 0 22 20"><rect x="0.5" y="0.5" width="19" height="15" fill="#d9d9d9"/><path d="M2 13 C4 6 6 2 8 3 C10 4 12 12 14 12 C16 12 17 4 19 3" fill="none" stroke="#888" stroke-width="1"/><circle cx="6.5" cy="3" r="1.2" fill="#7ec4f7"/><path d="M15.5 8 L21.5 19.5 H9.5Z" fill="#f4a261"/><rect x="15" y="12" width="1.2" height="4" fill="#fff"/></svg>
<svg class="r" style="left:1855px;top:988px;" width="20" height="15" viewBox="0 0 20 15"><rect x="0.6" y="0.6" width="18.8" height="13.8" fill="none" stroke="#d9d9d9" stroke-width="1.1"/><path d="M13 5 L15.5 2.5 M4.5 12 L7 9.5" stroke="#d9d9d9" stroke-width="1.4"/><path d="M12 2 H17 V7Z M3 8 V13 H8Z" fill="#d9d9d9"/></svg>
<svg class="r" style="left:1886px;top:986px;" width="20" height="19" viewBox="0 0 20 19"><rect x="0" y="0.8" width="20" height="2.6" fill="#e8e8e8"/><rect x="0" y="8.2" width="20" height="2.6" fill="#e8e8e8"/><rect x="0" y="15.6" width="20" height="2.6" fill="#e8e8e8"/></svg>
</body></html>
